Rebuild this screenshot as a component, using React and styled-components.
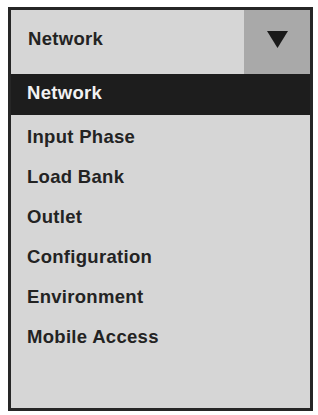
import React from "react";
import styled, { createGlobalStyle } from "styled-components";

const Global = createGlobalStyle`
  html, body { margin: 0; padding: 0; background: #ffffff; }
  body { font-family: "Liberation Sans", Arial, sans-serif; }
`;

const Panel = styled.div`
  box-sizing: border-box;
  margin: 7px 0 0 8px;
  width: 305px;
  height: 404px;
  border: 3px solid #262626;
  background: #d6d6d6;
  display: flex;
  flex-direction: column;
`;

const Bar = styled.div`
  display: flex;
  height: 64px;
  flex-shrink: 0;
`;

const Selected = styled.div`
  flex: 1;
  display: flex;
  align-items: center;
  padding: 0 0 6px 17px;
  font-size: 18.5px;
  font-weight: 700;
  letter-spacing: 0.3px;
  color: #232323;
`;

const Toggle = styled.div`
  width: 66px;
  background: #a9a9a9;
  display: flex;
  align-items: center;
  justify-content: center;
  padding-bottom: 6px;
  box-sizing: border-box;
`;

const List = styled.ul`
  list-style: none;
  margin: 0;
  padding: 0;
  display: flex;
  flex-direction: column;
`;

const Item = styled.li`
  height: ${(p) => (p.$active ? 41 : 40)}px;
  display: flex;
  align-items: center;
  padding-left: 16px;
  padding-bottom: ${(p) => (p.$active ? 3 : 0)}px;
  padding-top: ${(p) => (p.$active ? 0 : 3)}px;
  box-sizing: border-box;
  font-size: 18.5px;
  font-weight: 700;
  letter-spacing: 0.3px;
  background: ${(p) => (p.$active ? "#1d1d1d" : "transparent")};
  color: ${(p) => (p.$active ? "#f2f2f2" : "#232323")};
`;

const items = [
  "Network",
  "Input Phase",
  "Load Bank",
  "Outlet",
  "Configuration",
  "Environment",
  "Mobile Access",
];

export default function App() {
  return (
    <>
      <Global />
      <Panel>
        <Bar>
          <Selected>Network</Selected>
          <Toggle>
            <svg width="21" height="17" viewBox="0 0 21 17">
              <polygon points="0,0 21,0 10.5,17" fill="#1a1a1a" />
            </svg>
          </Toggle>
        </Bar>
        <List>
          {items.map((t, i) => (
            <Item key={t} $active={i === 0}>
              {t}
            </Item>
          ))}
        </List>
      </Panel>
    </>
  );
}
